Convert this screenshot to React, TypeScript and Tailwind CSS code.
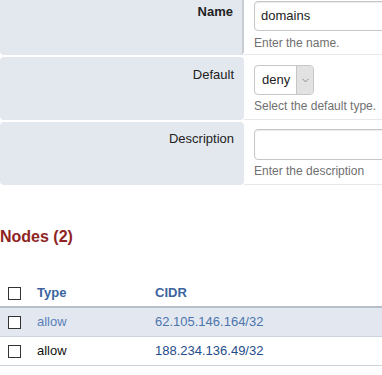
import { ChevronDown } from 'lucide-react'

type Node = {
    type: string,
    cidr: string,
    hover?: boolean
}

const nodes: Node[] = [
    { type: 'allow', cidr: '62.105.146.164/32', hover: true },
    { type: 'allow', cidr: '188.234.136.49/32' },
]

const Checkbox = () => (
    <span className='block w-[13px] h-[13px] border border-[#333] bg-white'></span>
)

const App = () => {
    return (
        <div className='w-[382px] h-[375px] overflow-hidden bg-white font-["Liberation_Sans",Arial,sans-serif] text-[13px] text-[#222]'>

            {/* form rows */}
            <div className='flex h-[55px] mb-[2px]'>
                <div className='w-[244px] shrink-0 bg-[#e3e8ef] rounded-b-[4px] border-r-2 border-[#c8cdd4] text-right pr-[9px] pt-[4px] leading-4 font-bold'>
                    Name
                </div>
                <div className='flex-1 pl-[10px] pt-[1px] border-b border-[#e6e8eb]'>
                    <div className='w-[200px] h-[30px] border border-[#c6c6c6] rounded-[4px] shadow-[inset_0_1px_1px_rgba(0,0,0,0.08)] px-[6px] flex items-center text-[13px] text-[#222]'>
                        domains
                    </div>
                    <p className='text-[12px] text-[#707070] mt-[4px] leading-4'>Enter the name.</p>
                </div>
            </div>

            <div className='flex h-[63px] mb-[2px]'>
                <div className='w-[244px] shrink-0 bg-[#e3e8ef] rounded-[4px] text-right pr-[10px] pt-[10px] leading-4'>
                    Default
                </div>
                <div className='flex-1 pl-[10px] pt-[8px] border-b border-[#e6e8eb]'>
                    <div className='w-[60px] h-[30px] border border-[#c6c6c6] rounded-[4px] flex overflow-hidden'>
                        <span className='flex-1 flex items-center pl-[7px] text-[13px] text-[#222]'>deny</span>
                        <span className='w-[17px] bg-[#e2e2e2] border-l border-[#c6c6c6] flex items-center justify-center'>
                            <ChevronDown size={11} strokeWidth={1.5} color='#666' />
                        </span>
                    </div>
                    <p className='text-[12px] text-[#707070] mt-[3px] leading-4'>Select the default type.</p>
                </div>
            </div>

            <div className='flex h-[63px]'>
                <div className='w-[244px] shrink-0 bg-[#e3e8ef] rounded-[4px] text-right pr-[10px] pt-[9px] leading-4'>
                    Description
                </div>
                <div className='flex-1 pl-[10px] pt-[7px] border-b border-[#e6e8eb]'>
                    <div className='w-[200px] h-[31px] border border-[#c6c6c6] rounded-[4px] shadow-[inset_0_1px_1px_rgba(0,0,0,0.08)]'></div>
                    <p className='text-[12px] text-[#707070] mt-[3px] leading-4'>Enter the description</p>
                </div>
            </div>

            {/* nodes */}
            <h2 className='mt-[42px] text-[16px] leading-5 font-bold text-[#8e2424]'>Nodes (2)</h2>

            <div className='mt-[33px]'>
                <div className='flex items-center h-[28px] border-b-2 border-[#b7bec9]'>
                    <span className='w-[37px] pl-[8px]'><Checkbox /></span>
                    <span className='w-[118px] font-bold text-[#3b64a0]'>Type</span>
                    <span className='font-bold text-[#3b64a0]'>CIDR</span>
                </div>
                {nodes.map(n => (
                    <div key={n.cidr} className={`flex items-center h-[29px] border-b border-[#cdd3dc] ${n.hover ? 'bg-[#e3e8f0]' : 'bg-white'}`}>
                        <span className='w-[37px] pl-[8px]'><Checkbox /></span>
                        <span className={`w-[118px] ${n.hover ? 'text-[#5a80b9]' : 'text-[#111]'}`}>{n.type}</span>
                        <span className={n.hover ? 'text-[#4c75ae]' : 'text-[#1f4c8a]'}>{n.cidr}</span>
                    </div>
                ))}
            </div>
        </div>
    )
}

export default App
